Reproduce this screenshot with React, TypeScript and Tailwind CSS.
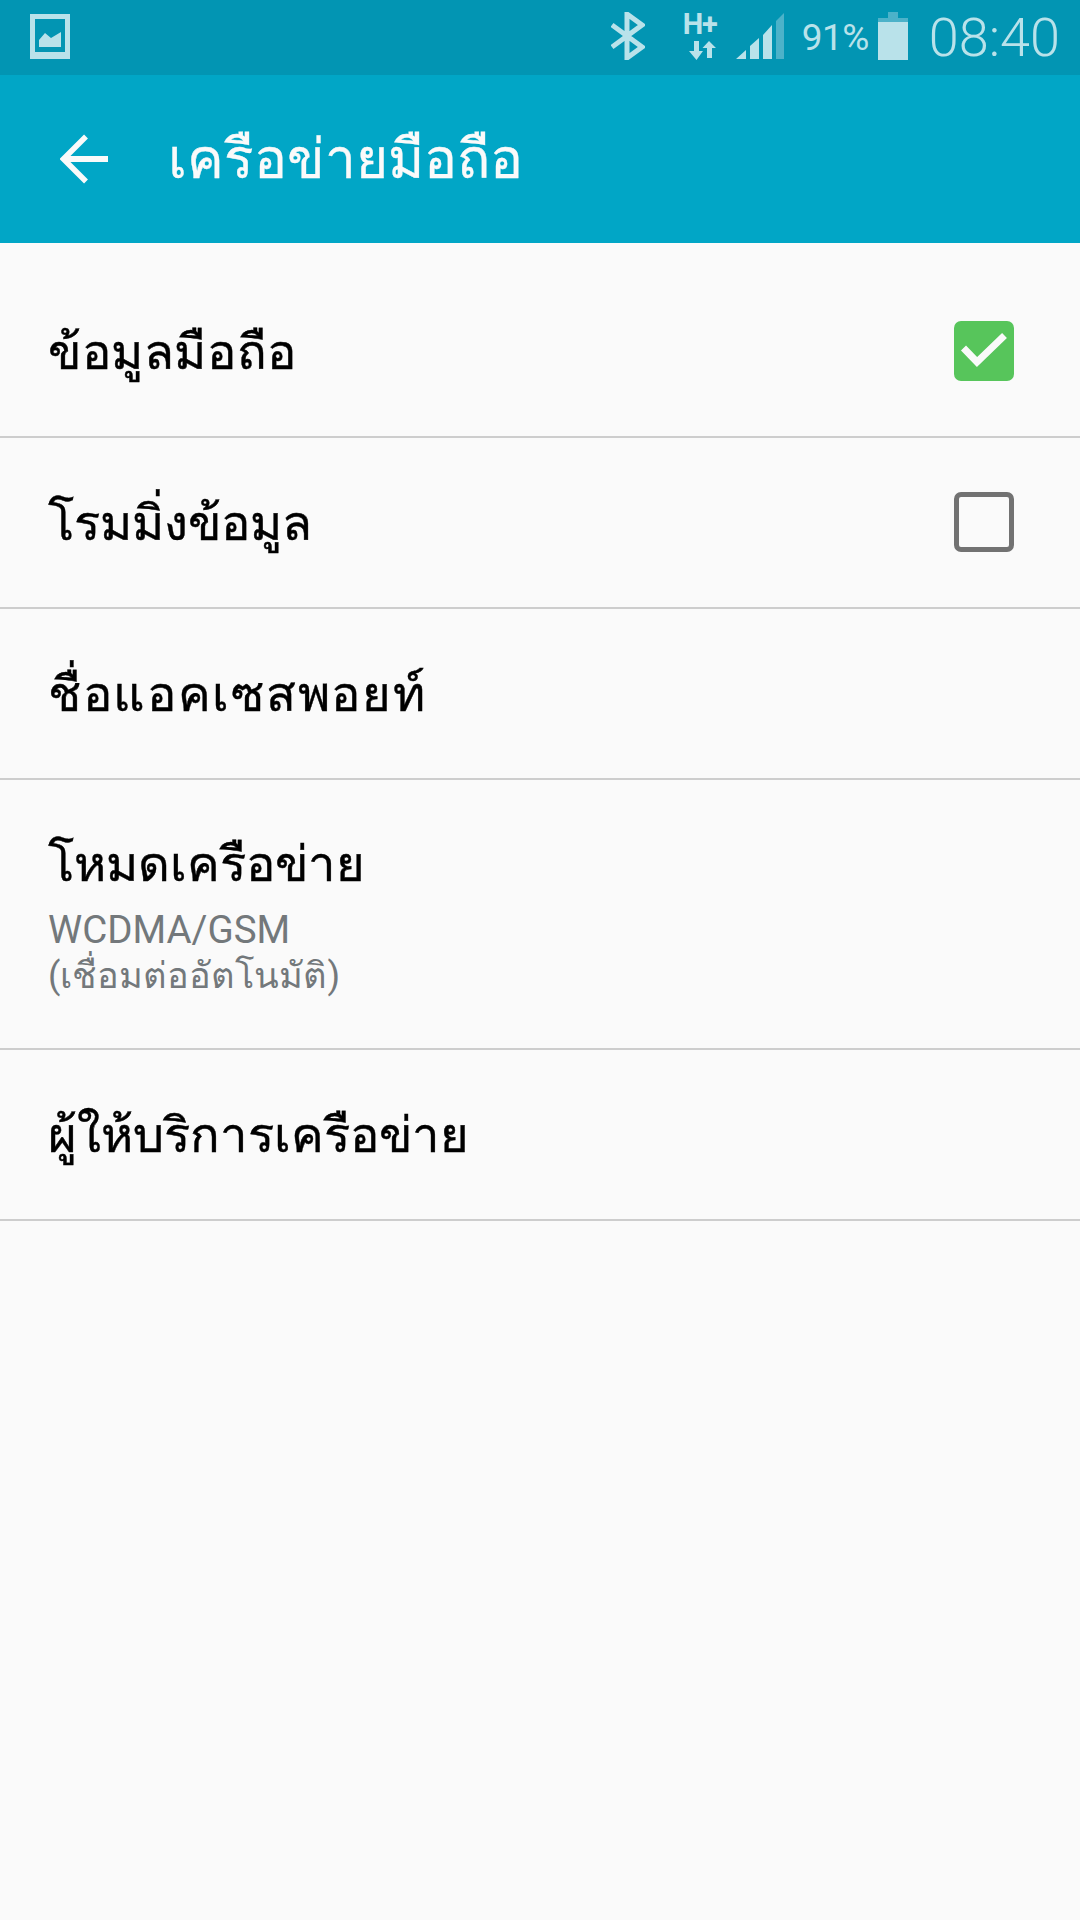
import React from 'react';

const font = "font-['Roboto','Noto_Sans','DejaVu_Sans',sans-serif]";

function Row({ title, titleClass, children, sub }: { title: string; titleClass?: string; children?: React.ReactNode; sub?: string[] }) {
  return (
    <div className={`flex items-center justify-between border-b-2 border-[#cdcdcd] pl-12 pr-[66px] ${sub ? 'h-[270px]' : 'h-[171px]'}`}>
      <div className={sub ? 'pt-[6px]' : 'pt-[2px]'}>
        <div className={`text-[49px] leading-[60px] text-black [-webkit-text-stroke:0.4px_black] ${titleClass ?? ''}`}>{title}</div>
        {sub && (
          <div className="mt-[12px] text-[#73787b]">
            <div className="text-[38.5px] leading-[46px]">{sub[0]}</div>
            <div className="text-[36.2px] leading-[46px]">{sub[1]}</div>
          </div>
        )}
      </div>
      {children}
    </div>
  );
}

export default function App() {
  return (
    <div className={`w-[1080px] h-[1920px] bg-[#fafafa] flex flex-col ${font}`}>
      <div className="h-[75px] bg-[#0295b3] flex items-center pl-[30px] pr-[20px] text-[#b9e2ea]">
        <svg width="40" height="45" viewBox="0 0 40 45" className="mt-[-2px]">
          <path d="M0 0H40V45H0Z M5 5V38H35V5Z" fill="#b9e2ea" fillRule="evenodd" />
          <path d="M9 33V26L15 19L21 24L31 18V33Z" fill="#b9e2ea" />
        </svg>
        <div className="ml-auto flex items-center">
          <svg width="34" height="48" viewBox="0 0 34 48" className="mt-[-3px]">
            <path d="M1 13L31 35L16 46V2L31 13L1 35" fill="none" stroke="#b9e2ea" strokeWidth="5" />
          </svg>
          <div className="ml-[38px] w-[38px] h-[52px] relative">
            <div className="text-[29px] leading-[24px] font-bold tracking-[-1px] absolute top-0 left-0">H+</div>
            <svg width="28" height="24" viewBox="0 0 28 24" className="absolute left-[5px] top-[29px]">
              <path d="M6 0H11V10H15L8.500 19L1 10H6Z" fill="#b9e2ea" />
              <path d="M19 17V7H14.500L21 0L28 7H24V17Z" fill="#b9e2ea" />
            </svg>
          </div>
          <svg width="48" height="48" viewBox="0 0 48 48" className="ml-[15px] mt-[-3px]">
            <path d="M0 47L10 38V47Z M14 34L23 26V47H14Z M27 23L36 13V47H27Z" fill="#b9e2ea" />
            <path d="M40 9L48 1V47H40Z" fill="#4cb2c9" />
          </svg>
          <div className="ml-[18px] text-[37px] leading-none tracking-[-0.5px]">91%</div>
          <svg width="30" height="48" viewBox="0 0 30 48" className="ml-[9px] mt-[-3px]">
            <path d="M10 0H20V6H30V48H0V6H10Z" fill="#b9e2ea" />
            <path d="M10 0H20V6H30V10H0V6H10Z" fill="#4cb2c9" />
          </svg>
          <div className="ml-[21px] text-[54px] leading-none font-light">08:40</div>
        </div>
      </div>

      <div className="h-[168px] bg-[#01a6c6] flex items-center pl-[60px] text-[#fafafa]">
        <svg width="48" height="50" viewBox="0 0 48 50" fill="none" stroke="#fafafa">
          <path d="M3 25H48" strokeWidth="6" />
          <path d="M26 2.500L3.500 25L26 47.500" strokeWidth="5.500" />
        </svg>
        <div className="ml-[60px] text-[55px] leading-[60px] [-webkit-text-stroke:0.3px_#fafafa]">เครือข่ายมือถือ</div>
      </div>

      <div className="pt-6">
        <Row title="ข้อมูลมือถือ" titleClass="tracking-[0.6px]">
          <div className="size-[60px] mb-[2px] rounded-[7px] bg-[#57c55b] flex items-center justify-center">
            <svg width="60" height="60" viewBox="0 0 60 60" fill="none">
              <path d="M9.500 27L23 41L50.500 14.500" stroke="#fafafa" strokeWidth="7" />
            </svg>
          </div>
        </Row>
        <Row title="โรมมิ่งข้อมูล">
          <div className="size-[60px] mb-[2px] rounded-[7px] border-[5px] border-[#727272]" />
        </Row>
        <Row title="ชื่อแอคเซสพอยท์" titleClass="tracking-[1.7px]" />
        <Row title="โหมดเครือข่าย" sub={['WCDMA/GSM', '(เชื่อมต่ออัตโนมัติ)']} />
        <Row title="ผู้ให้บริการเครือข่าย" />
      </div>
    </div>
  );
}
